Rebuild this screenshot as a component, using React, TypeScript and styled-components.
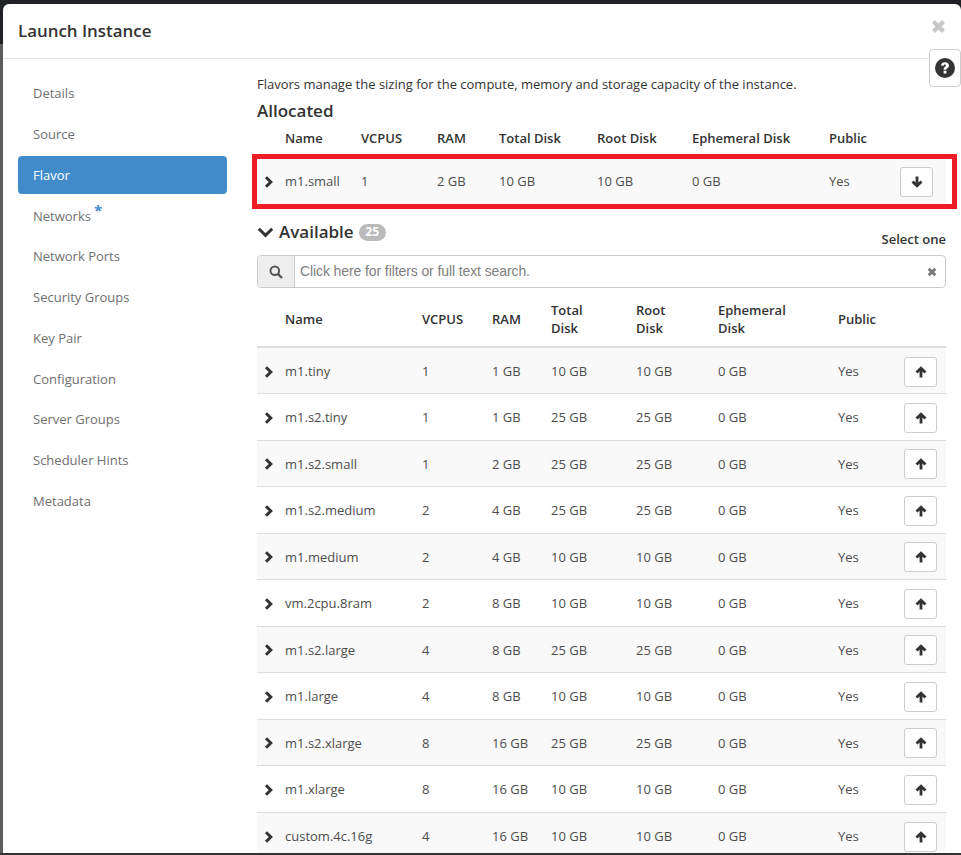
import React, {FunctionComponent} from 'react';
import styled, {createGlobalStyle} from 'styled-components';

const GlobalStyle = createGlobalStyle`
    html, body {
        margin: 0;
        padding: 0;
        height: 100%;
        overflow: hidden;
    }

    body {
        font-family: 'Open Sans', 'Liberation Sans', sans-serif;
        font-size: 13px;
        line-height: 1.428;
        color: #333;
    }

    * {
        box-sizing: border-box;
    }
`;

const Backdrop = styled.div`
    width: 961px;
    height: 855px;
    overflow: hidden;
    background: linear-gradient(#1f2124 0, #1f2124 44px, #5c5c5c 44px, #5c5c5c 853px, #333 853px);
    padding: 4px 0 2px 3px;
`;

const Modal = styled.div`
    position: relative;
    height: 849px;
    background: #fff;
    border-radius: 6px 6px 0 0;
    overflow: hidden;
`;

const Header = styled.div`
    height: 55px;
    padding: 15px 15px 0;
    border-bottom: 1px solid #e5e5e5;
`;

const Title = styled.h4`
    margin: 0;
    font-size: 16.9px;
    font-weight: 600;
    line-height: 24px;
    color: #333;
`;

const CloseMark = styled.span`
    position: absolute;
    top: 15px;
    right: 15px;
    color: #c8c8c8;
    display: flex;
`;

const HelpButton = styled.button`
    position: absolute;
    top: 45px;
    right: 0;
    width: 32px;
    height: 38px;
    padding: 0;
    display: flex;
    align-items: center;
    justify-content: center;
    background: #fff;
    border: 1px solid #ccc;
    border-radius: 4px;
    color: #333;
`;

const Body = styled.div`
    display: flex;
`;

const Sidebar = styled.nav`
    flex: none;
    width: 254px;
    padding: 15.4px 30px 0 15px;
`;

const NavItem = styled.div<{$active?: boolean}>`
    height: 38px;
    margin-bottom: 2.8px;
    padding: 0 15px;
    display: flex;
    align-items: center;
    border-radius: 4px;
    background: ${props => (props.$active ? '#428bca' : 'transparent')};
    color: ${props => (props.$active ? '#fff' : '#6f6f6f')};
`;

const Required = styled.span`
    color: #428bca;
    font-size: 15px;
    font-weight: 700;
    line-height: 1;
    margin: -10px 0 0 3px;
`;

const Content = styled.div`
    flex: none;
    width: 689px;
    padding-top: 15px;
`;

const Help = styled.p`
    margin: 0;
    line-height: 20px;
`;

const SectionTitle = styled.h3`
    margin: 5px 0 0;
    font-size: 17px;
    font-weight: 600;
    line-height: 24px;
    color: #333;
`;

const AllocatedFrame = styled.div`
    margin: 0 -11px 0 -5px;
    padding-right: 6px;
    border: 5px solid #ee1c25;
    background: #fff;
`;

const Table = styled.table`
    width: 689px;
    border-collapse: collapse;
    table-layout: fixed;
`;

const HeadCell = styled.th<{$thick?: boolean}>`
    padding: ${props => (props.$thick ? '4px 0 0' : '0 0 2px')};
    text-align: left;
    font-weight: 600;
    line-height: 18px;
    border-bottom: ${props => (props.$thick ? '2px solid #ddd' : '0')};
    vertical-align: middle;
`;

const AllocatedHead = styled.tr`
    height: 31px;
`;

const AvailableHead = styled.tr`
    height: 59px;
`;

const Row = styled.tr<{$striped?: boolean}>`
    height: 46.5px;
    background: ${props => (props.$striped ? '#f9f9f9' : '#fff')};

    > td {
        border-top: 1px solid #ddd;
        padding-top: 2px;
    }
`;

const AllocatedRow = styled.tr`
    height: 45px;
    background: #f9f9f9;
`;

const Cell = styled.td`
    padding: 0;
    vertical-align: middle;
    color: #4d4d4d;
`;

const ChevronCell = styled(Cell)`
    color: #333;
    padding-left: 6px;
`;

const MoveButton = styled.button`
    width: 33px;
    height: 30px;
    padding: 0;
    display: inline-flex;
    align-items: center;
    justify-content: center;
    vertical-align: middle;
    background: #fff;
    border: 1px solid #ccc;
    border-radius: 3px;
    color: #333;
`;

const AvailableBar = styled.div`
    display: flex;
    justify-content: space-between;
    align-items: flex-end;
    height: 33px;
    margin-top: 10px;
`;

const AvailableTitle = styled.div`
    display: flex;
    align-items: center;
    font-size: 17px;
    font-weight: 600;
    line-height: 24px;
    margin-bottom: 8px;
`;

const Badge = styled.span`
    margin-left: 5px;
    width: 27px;
    height: 17px;
    display: flex;
    align-items: center;
    justify-content: center;
    border-radius: 9px;
    background: #bbb;
    color: #fff;
    font-size: 12px;
    font-weight: 700;
    line-height: 1;
`;

const SelectOne = styled.span`
    font-size: 13px;
    font-weight: 600;
    line-height: 18px;
    margin-bottom: 4px;
`;

const Search = styled.div`
    display: flex;
    height: 33px;
    margin-top: 3px;
    border: 1px solid #ccc;
    border-radius: 4px;
    overflow: hidden;
`;

const SearchAddon = styled.div`
    flex: none;
    width: 37px;
    display: flex;
    align-items: center;
    justify-content: center;
    background: #eee;
    border-right: 1px solid #ccc;
    color: #555;
`;

const SearchText = styled.div`
    flex: 1;
    padding: 0 5px;
    display: flex;
    align-items: center;
    font-family: 'Liberation Sans', Arial, sans-serif;
    font-size: 14px;
    color: #808080;
    letter-spacing: -0.1px;
`;

const SearchClear = styled.div`
    flex: none;
    width: 18px;
    display: flex;
    align-items: center;
    color: #777;
`;

const Chevron: FunctionComponent = () => (
    <svg width="12" height="12" viewBox="0 0 12 12" style={{display: 'block'}}>
        <path d="M3 1.2 7.8 6 3 10.8" fill="none" stroke="currentColor" strokeWidth="3" />
    </svg>
);

const DownChevron = () => (
    <svg width="17" height="12" viewBox="0 0 17 12" style={{display: 'block', marginRight: 5}}>
        <path d="M1.8 2.8 8.5 9.4l6.7-6.6" fill="none" stroke="currentColor" strokeWidth="3" />
    </svg>
);

const Arrow: FunctionComponent<{down?: boolean}> = ({down}) => (
    <svg width="12" height="12" viewBox="0 0 12 12" style={{display: 'block', transform: down ? 'rotate(180deg)' : undefined}}>
        <path d="M6 11.5V2.5M1.5 6.6 6 2.2l4.5 4.4" fill="none" stroke="currentColor" strokeWidth="2.8" />
    </svg>
);

const Cross: FunctionComponent<{size: number}> = ({size}) => (
    <svg width={size} height={size} viewBox="0 0 12 12" style={{display: 'block'}}>
        <path d="M2 2l8 8M10 2l-8 8" fill="none" stroke="currentColor" strokeWidth="3.4" />
    </svg>
);

const Magnifier = () => (
    <svg width="14" height="14" viewBox="0 0 14 14" style={{display: 'block'}}>
        <circle cx="5.8" cy="5.8" r="4.3" fill="none" stroke="currentColor" strokeWidth="2" />
        <path d="M9 9l4 4" fill="none" stroke="currentColor" strokeWidth="2.4" />
    </svg>
);

const Question = () => (
    <svg width="20" height="20" viewBox="0 0 20 20" style={{display: 'block'}}>
        <circle cx="10" cy="10" r="10" fill="currentColor" />
        <path d="M6 7.6c.2-2.2 1.8-3.4 4-3.4 2.3 0 4 1.3 4 3.3 0 2.5-2.6 2.6-2.6 4.3H8.6c0-3 2.3-3 2.3-4.2 0-.6-.4-1-1-1-.7 0-1.1.5-1.3 1.2zM8.6 12.7h2.8v2.8H8.6z" fill="#fff" />
    </svg>
);

const navItems = [
    'Details',
    'Source',
    'Flavor',
    'Networks',
    'Network Ports',
    'Security Groups',
    'Key Pair',
    'Configuration',
    'Server Groups',
    'Scheduler Hints',
    'Metadata'
];

const allocatedColumns = [
    ['', 28],
    ['Name', 76],
    ['VCPUS', 76],
    ['RAM', 62],
    ['Total Disk', 98],
    ['Root Disk', 95],
    ['Ephemeral Disk', 137],
    ['Public', 71],
    ['', 46]
] as const;

const availableColumns = [
    ['', 28],
    ['Name', 137],
    ['VCPUS', 70],
    ['RAM', 59],
    ['Total\nDisk', 85],
    ['Root\nDisk', 82],
    ['Ephemeral\nDisk', 120],
    ['Public', 66],
    ['', 42]
] as const;

const flavors = [
    ['m1.tiny', 1, 1, 10],
    ['m1.s2.tiny', 1, 1, 25],
    ['m1.s2.small', 1, 2, 25],
    ['m1.s2.medium', 2, 4, 25],
    ['m1.medium', 2, 4, 10],
    ['vm.2cpu.8ram', 2, 8, 10],
    ['m1.s2.large', 4, 8, 25],
    ['m1.large', 4, 8, 10],
    ['m1.s2.xlarge', 8, 16, 25],
    ['m1.xlarge', 8, 16, 10],
    ['custom.4c.16g', 4, 16, 10]
] as const;

const App: FunctionComponent = () => (
    <Backdrop>
        <GlobalStyle />
        <Modal>
            <Header>
                <Title>Launch Instance</Title>
            </Header>
            <CloseMark>
                <Cross size={15} />
            </CloseMark>
            <HelpButton aria-label="Help">
                <Question />
            </HelpButton>
            <Body>
                <Sidebar>
                    {navItems.map(item => (
                        <NavItem key={item} $active={item === 'Flavor'}>
                            {item}
                            {item === 'Networks' && <Required>*</Required>}
                        </NavItem>
                    ))}
                </Sidebar>
                <Content>
                    <Help>Flavors manage the sizing for the compute, memory and storage capacity of the instance.</Help>
                    <SectionTitle>Allocated</SectionTitle>
                    <Table>
                        <colgroup>
                            {allocatedColumns.map(([, width], i) => (
                                <col key={i} style={{width}} />
                            ))}
                        </colgroup>
                        <thead>
                            <AllocatedHead>
                                {allocatedColumns.map(([label], i) => (
                                    <HeadCell key={i}>{label}</HeadCell>
                                ))}
                            </AllocatedHead>
                        </thead>
                    </Table>
                    <AllocatedFrame>
                        <Table>
                            <colgroup>
                                {allocatedColumns.map(([, width], i) => (
                                    <col key={i} style={{width}} />
                                ))}
                            </colgroup>
                            <tbody>
                                <AllocatedRow>
                                    <ChevronCell>
                                        <Chevron />
                                    </ChevronCell>
                                    <Cell>m1.small</Cell>
                                    <Cell>1</Cell>
                                    <Cell>2 GB</Cell>
                                    <Cell>10 GB</Cell>
                                    <Cell>10 GB</Cell>
                                    <Cell>0 GB</Cell>
                                    <Cell>Yes</Cell>
                                    <Cell>
                                        <MoveButton aria-label="Remove">
                                            <Arrow down />
                                        </MoveButton>
                                    </Cell>
                                </AllocatedRow>
                            </tbody>
                        </Table>
                    </AllocatedFrame>
                    <AvailableBar>
                        <AvailableTitle>
                            <DownChevron />
                            Available
                            <Badge>25</Badge>
                        </AvailableTitle>
                        <SelectOne>Select one</SelectOne>
                    </AvailableBar>
                    <Search>
                        <SearchAddon>
                            <Magnifier />
                        </SearchAddon>
                        <SearchText>Click here for filters or full text search.</SearchText>
                        <SearchClear>
                            <Cross size={10} />
                        </SearchClear>
                    </Search>
                    <Table>
                        <colgroup>
                            {availableColumns.map(([, width], i) => (
                                <col key={i} style={{width}} />
                            ))}
                        </colgroup>
                        <thead>
                            <AvailableHead>
                                {availableColumns.map(([label], i) => (
                                    <HeadCell key={i} $thick>
                                        {label.split('\n').map(part => (
                                            <div key={part}>{part}</div>
                                        ))}
                                    </HeadCell>
                                ))}
                            </AvailableHead>
                        </thead>
                        <tbody>
                            {flavors.map(([name, vcpus, ram, disk], i) => (
                                <Row key={name} $striped={i % 2 === 0}>
                                    <ChevronCell>
                                        <Chevron />
                                    </ChevronCell>
                                    <Cell>{name}</Cell>
                                    <Cell>{vcpus}</Cell>
                                    <Cell>{ram} GB</Cell>
                                    <Cell>{disk} GB</Cell>
                                    <Cell>{disk} GB</Cell>
                                    <Cell>0 GB</Cell>
                                    <Cell>Yes</Cell>
                                    <Cell>
                                        <MoveButton aria-label="Add">
                                            <Arrow />
                                        </MoveButton>
                                    </Cell>
                                </Row>
                            ))}
                        </tbody>
                    </Table>
                </Content>
            </Body>
        </Modal>
    </Backdrop>
);

export default App;
